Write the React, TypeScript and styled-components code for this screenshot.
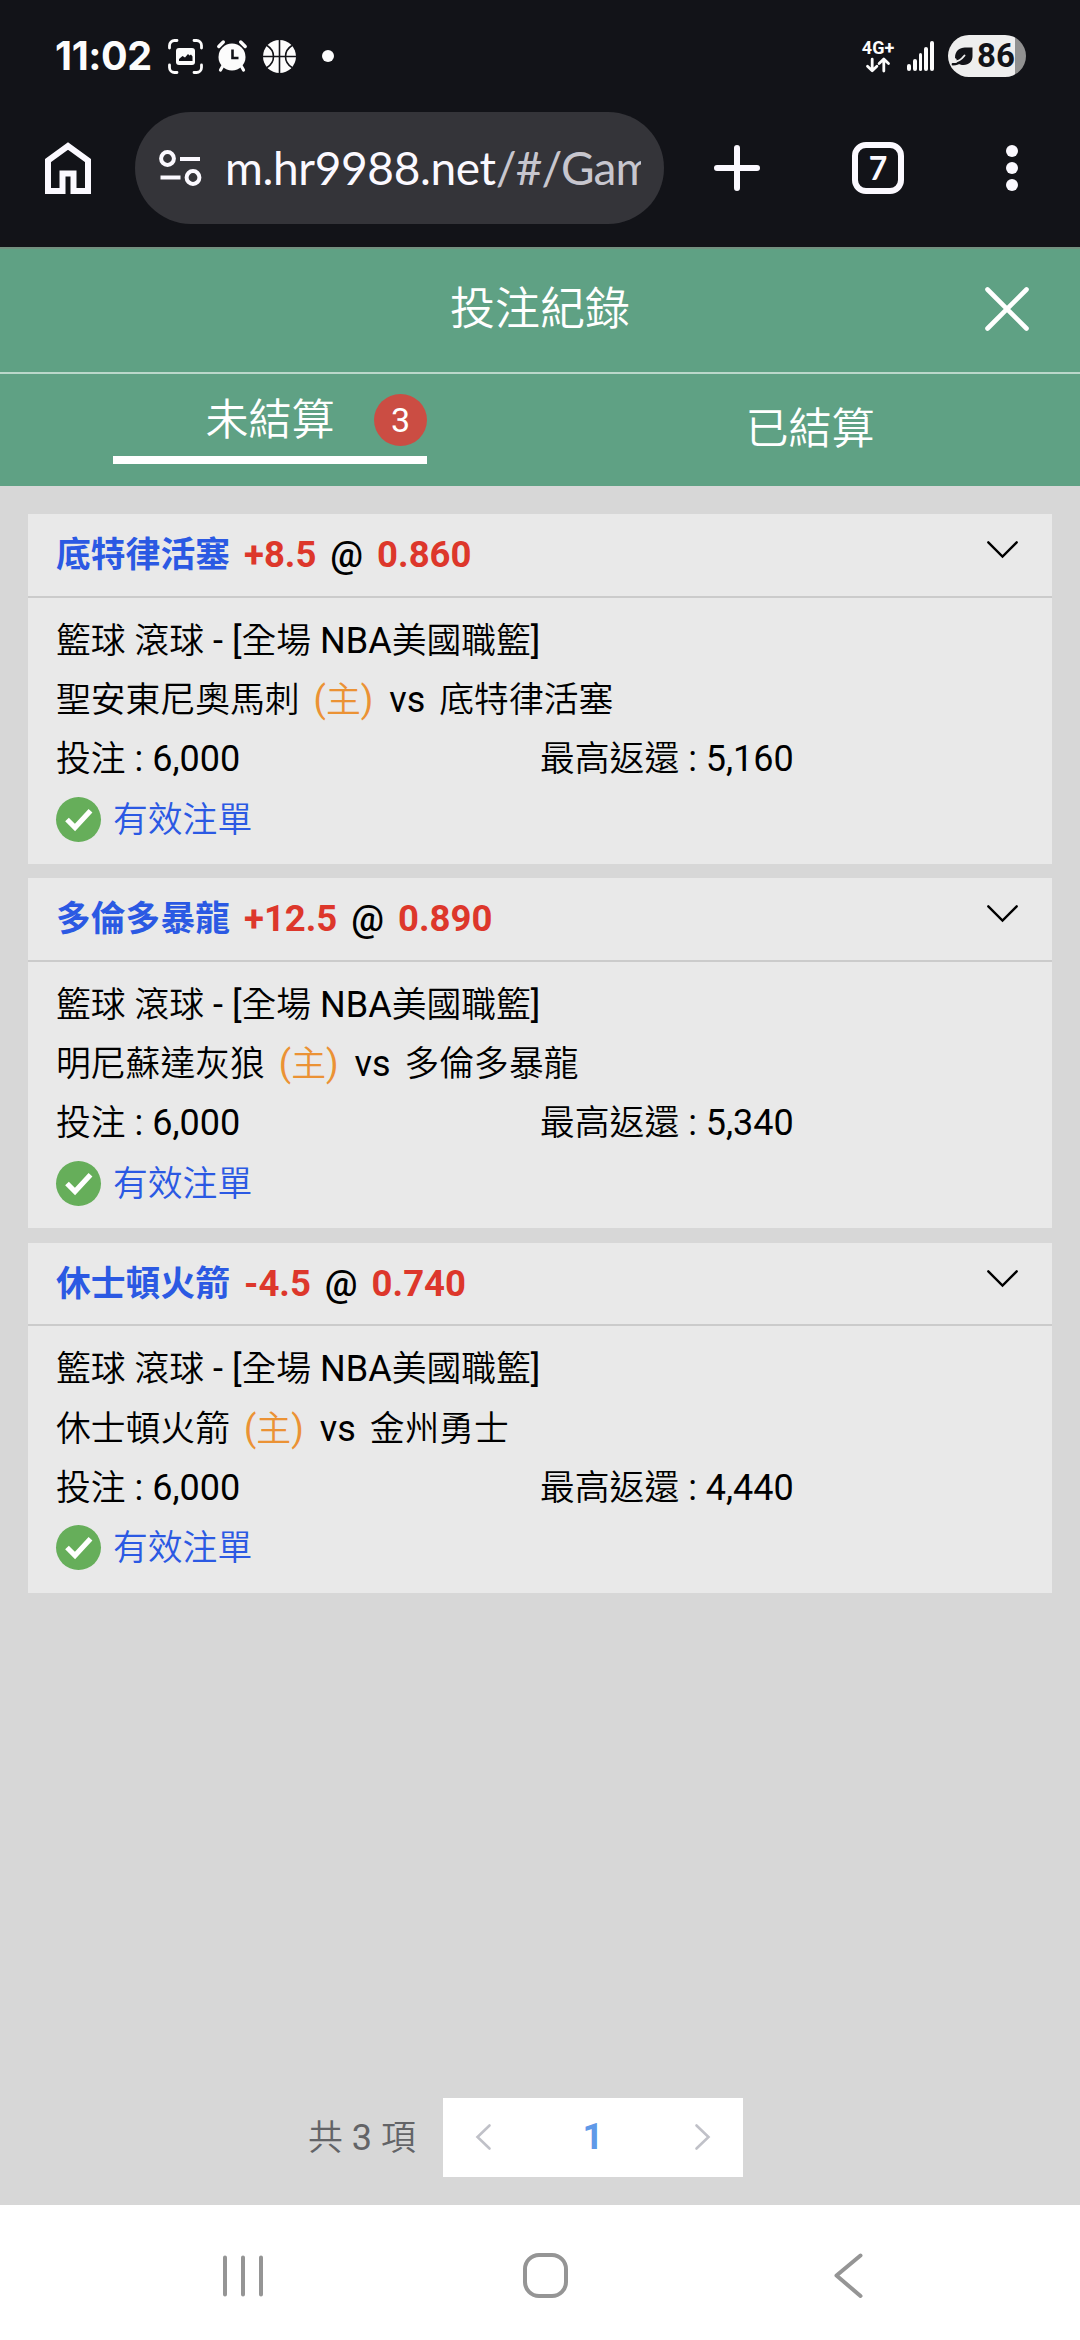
import React from "react";
import styled, { createGlobalStyle } from "styled-components";

const GlobalStyle = createGlobalStyle`
  * { box-sizing: border-box; }
  html, body { margin: 0; padding: 0; }
  body { background: #d7d7d7; }
  button { border: 0; padding: 0; background: none; color: inherit; font: inherit; }
  svg { display: block; flex: none; overflow: visible; }
`;

const Screen = styled.div`
  width: 1080px;
  height: 2340px;
  display: flex;
  flex-direction: column;
  overflow: hidden;
  background: #d7d7d7;
  color: #000;
  font-family: Roboto, "Noto Sans CJK TC", sans-serif;
`;

/* ---------- phone status bar ---------- */

const StatusBar = styled.div`
  height: 112px;
  flex: none;
  display: flex;
  align-items: center;
  justify-content: space-between;
  padding: 0 54px 0 55px;
  background: #121318;
  color: #fcfcfc;
`;

const StatusGroup = styled.div`
  display: flex;
  align-items: center;
`;

const Clock = styled.span`
  width: 113px;
  font: 700 39.500px/40px Inter, sans-serif;
  letter-spacing: -0.4px;
  white-space: nowrap;
`;

const NoticeIcons = styled.div`
  display: flex;
  align-items: center;
`;

const NoticeSlot = styled.span<{ $gap: number }>`
  display: block;
  margin-right: ${(p) => p.$gap}px;
`;

const Network = styled.div`
  width: 34px;
  display: flex;
  flex-direction: column;
  align-items: center;
  gap: 3px;
  margin-right: 12px;
`;

const NetworkName = styled.span`
  font: 700 18px/14px Roboto, sans-serif;
  white-space: nowrap;
`;

const Signal = styled.div`
  height: 29px;
  display: flex;
  align-items: flex-end;
  gap: 2px;
  margin-right: 14px;
`;

const SignalBar = styled.i<{ $h: number }>`
  width: 3.8px;
  height: ${(p) => p.$h}px;
  border-radius: 2px;
  background: #fcfcfc;
`;

const Battery = styled.div`
  width: 78px;
  height: 42px;
  border-radius: 21px;
  display: flex;
  align-items: center;
  padding-left: 4px;
  gap: 4px;
  background: linear-gradient(90deg, #eeeeee 67px, #919191 67px);
  color: #121318;
  font: 700 33px/42px Roboto, sans-serif;
`;

/* ---------- browser toolbar ---------- */

const BrowserBar = styled.div`
  height: 135px;
  flex: none;
  display: flex;
  align-items: flex-start;
  padding-left: 45px;
  background: #121318;
  color: #fbf9ff;
`;

const ToolButton = styled.button<{ $w: number; $after: number }>`
  width: ${(p) => p.$w}px;
  height: 112px;
  flex: none;
  display: flex;
  align-items: center;
  justify-content: center;
  margin-right: ${(p) => p.$after}px;
`;

const AddressPill = styled.div`
  width: 529px;
  height: 112px;
  flex: none;
  display: flex;
  align-items: center;
  padding: 0 23px 0 24px;
  gap: 23px;
  margin-right: 50px;
  border-radius: 56px;
  background: #343439;
`;

const Address = styled.div`
  flex: 1;
  min-width: 0;
  overflow: hidden;
  white-space: nowrap;
  font: 400 46px/60px Lato, sans-serif;
  letter-spacing: -0.35px;
`;

const AddressPath = styled.span`
  color: #c7c6ce;
  letter-spacing: -0.9px;
`;

const TabCount = styled.span`
  width: 52px;
  height: 52px;
  border: 6px solid #fbf9ff;
  border-radius: 14px;
  display: flex;
  align-items: center;
  justify-content: center;
  font: 700 32px/40px Lato, sans-serif;
`;

/* ---------- page header ---------- */

const PageHeader = styled.header`
  height: 127px;
  flex: none;
  display: grid;
  grid-template-columns: 100px 1fr 100px;
  align-items: center;
  justify-items: center;
  padding-bottom: 3px;
  border-top: 2px solid #73907f;
  border-bottom: 2px solid #bbd8cb;
  background: #5fa184;
  color: #fff;
`;

const PageTitle = styled.h1`
  grid-column: 2;
  margin: 0;
  padding-top: 2px;
  font-size: 45px;
  font-weight: 350;
  line-height: 60px;
`;

const CloseButton = styled.button`
  margin-right: 46px;
`;

const Tabs = styled.nav`
  height: 112px;
  flex: none;
  display: grid;
  grid-template-columns: 1fr 1fr;
  justify-items: center;
  background: #5fa184;
  color: #fff;
`;

const Tab = styled.div<{ $active?: boolean }>`
  width: 314px;
  height: ${(p) => (p.$active ? 90 : 100)}px;
  display: grid;
  grid-template-columns: 1fr auto 1fr;
  align-items: center;
  justify-items: end;
  border-bottom: ${(p) => (p.$active ? "8px solid #fff" : "0")};
`;

const TabLabel = styled.span`
  grid-column: 2;
  padding-top: 9px;
  font-size: 43px;
  font-weight: 350;
  line-height: 56px;
`;

const TabBadge = styled.span`
  width: 53px;
  height: 52px;
  margin-top: 10px;
  border-radius: 50%;
  background: #cb4d43;
  font-size: 34px;
  line-height: 53px;
  text-align: center;
`;

/* ---------- bet list ---------- */

const List = styled.main`
  flex: 1;
  display: flex;
  flex-direction: column;
  gap: 14.4px;
  padding: 28px 28px 0;
`;

const Card = styled.section`
  height: 350px;
  background: #e9e9e9;
  font-size: 34.8px;
  font-weight: 350;
`;

const Latin = styled.span`
  font-size: 36px;
  font-weight: 400;
`;

const CardHead = styled.div`
  height: 83.6px;
  display: flex;
  align-items: flex-start;
  justify-content: space-between;
  padding: 17px 34px 0 28px;
  border-bottom: 2px solid #cbcbcb;
`;

const Selection = styled.div`
  display: flex;
  gap: 14px;
  font-size: 36.500px;
  line-height: 48px;
`;

const Team = styled.span`
  color: #2b59e3;
  font-size: 34.8px;
  font-weight: 700;
`;

const Odds = styled.span`
  color: #dd372b;
  font-weight: 700;
`;

const At = styled.span`
  font-weight: 500;
`;

const ChevronSlot = styled.span`
  padding-top: 10px;
`;

const CardBody = styled.div`
  display: flex;
  flex-direction: column;
  padding: 14px 28px 0;
`;

const Line = styled.div`
  height: 59.2px;
  line-height: 59px;
  white-space: pre;
`;

const Matchup = styled(Line)`
  display: flex;
`;

const Host = styled.span`
  margin: 0 16px 0 14px;
  color: #eb9234;
`;

const Versus = styled(Latin)`
  margin-right: 14px;
`;

const Amounts = styled(Line)`
  display: grid;
  grid-template-columns: 1fr 1fr;
`;

const Status = styled(Line)`
  display: flex;
  align-items: center;
  gap: 12px;
  height: 60px;
  color: #2b59e3;
`;

const StatusText = styled.span`
  padding-top: 2px;
`;

/* ---------- pager ---------- */

const Pager = styled.footer`
  height: 107px;
  flex: none;
  display: flex;
  align-items: flex-start;
  padding-left: 308px;
  gap: 28px;
  font-size: 35px;
  color: #636467;
`;

const Total = styled.span`
  width: 107px;
  padding-top: 2px;
  font-size: 34.8px;
  font-weight: 350;
  line-height: 76px;
  white-space: nowrap;
`;

const PageBox = styled.div`
  width: 300px;
  height: 79px;
  display: flex;
  align-items: center;
  justify-content: space-between;
  padding: 0 33px 2px;
  background: #fff;
`;

const PageNumber = styled.span`
  color: #5f99e8;
  font-size: 36.500px;
  font-weight: 700;
  line-height: 76px;
`;

const SystemNav = styled.div`
  height: 135px;
  flex: none;
  display: flex;
  align-items: flex-start;
  padding: 48px 0 0 223px;
  background: #fff;
`;

const NavKey = styled.button<{ $after: number }>`
  margin-right: ${(p) => p.$after}px;
`;

/* ---------- icons ---------- */

const CaptureIcon = () => (
  <svg width="35" height="35" viewBox="0 0 35 35" fill="none">
    <path
      d="M1.5 9V6.5a5 5 0 0 1 5-5H9M26 1.5h2.500a5 5 0 0 1 5 5V9M33.500 26v2.500a5 5 0 0 1-5 5H26M9 33.500H6.500a5 5 0 0 1-5-5V26"
      stroke="#fcfcfc"
      strokeWidth="2.8"
      strokeLinecap="round"
    />
    <rect x="8" y="9" width="19" height="17" rx="3" fill="#fcfcfc" />
    <path d="M11 22v-2l3.500-3 2.500 1.500 3-3.500 1.500 1.500 1.500-1 1.500 2V22z" fill="#121318" />
  </svg>
);

const AlarmIcon = () => (
  <svg width="30" height="32" viewBox="0 0 30 32" fill="none">
    <circle cx="15" cy="17" r="13.500" fill="#fcfcfc" />
    <path d="M1.800 6.500l4.500-4.500M28.200 6.500L23.700 2" stroke="#fcfcfc" strokeWidth="3.400" strokeLinecap="round" />
    <path d="M5.500 26.500L3.500 30M24.500 26.500l2 3.500" stroke="#fcfcfc" strokeWidth="3.200" strokeLinecap="round" />
    <path d="M15.500 9.500v8.500h6" stroke="#121318" strokeWidth="2.600" />
  </svg>
);

const BallIcon = () => (
  <svg width="33" height="33" viewBox="0 0 33 33" fill="none">
    <circle cx="16.500" cy="16.500" r="16.500" fill="#fcfcfc" />
    <path
      d="M16.500 0v33M0 16.500h33M4 5.500C8 8 10.500 11.500 10.500 16.500S8 25 4 27.500M29 5.500c-4 2.500-6.500 6-6.500 11s2.500 8.500 6.500 11"
      stroke="#121318"
      strokeWidth="1.600"
    />
  </svg>
);

const DotIcon = () => (
  <svg width="12" height="12" viewBox="0 0 12 12">
    <circle cx="6" cy="6" r="6" fill="#fcfcfc" />
  </svg>
);

const ArrowsIcon = () => (
  <svg width="24" height="14" viewBox="0 0 24 14" fill="none" stroke="#fcfcfc" strokeWidth="2.800" strokeLinecap="round" strokeLinejoin="round">
    <path d="M6.200 1.200V12.500M1.500 8.300l4.700 4.500 4.700-4.500M17.800 13V1.300M13.100 5.500l4.700-4.500 4.700 4.500" />
  </svg>
);

const LeafIcon = () => (
  <svg width="21" height="19" viewBox="0 0 21 19" fill="none">
    <path d="M20.500.5v8.500c0 5.500-3.500 9-9 9C7 18 3 15.500 3 10.500 3 4 7.500.5 13 .5z" fill="#121318" />
    <path d="M0 12.500c1.500.5 3 .5 4.500-.2" stroke="#eeeeee" strokeWidth="2.500" />
    <path d="M.8 17.300c4.200 0 6.700-1.200 8.700-3.300" stroke="#121318" strokeWidth="2.400" strokeLinecap="round" />
    <path d="M1.500 15c4.500-.3 8-2.500 11-6.500" stroke="#eeeeee" strokeWidth="1.900" strokeLinecap="round" />
  </svg>
);

const HomeIcon = () => (
  <svg width="46" height="52" viewBox="0 0 46 52" fill="none" stroke="#fbf9ff" strokeWidth="6">
    <path d="M3 49V18.500L23 4l20 14.500V49H28.500V31.500h-11V49z" />
  </svg>
);

const TuneIcon = () => (
  <svg width="43" height="36" viewBox="0 0 43 36" fill="none" stroke="#fbf9ff" strokeWidth="4">
    <circle cx="8.500" cy="8.500" r="6.400" />
    <circle cx="34" cy="27.500" r="6.400" />
    <path d="M21 9h20M1.500 27.500h20" />
  </svg>
);

const PlusIcon = () => (
  <svg width="46" height="46" viewBox="0 0 46 46" fill="none" stroke="#fbf9ff" strokeWidth="6" strokeLinecap="round">
    <path d="M23 3v40M3 23h40" />
  </svg>
);

const MoreIcon = () => (
  <svg width="12" height="46" viewBox="0 0 12 46" fill="#fbf9ff">
    <circle cx="6" cy="6" r="6" />
    <circle cx="6" cy="23" r="6" />
    <circle cx="6" cy="40" r="6" />
  </svg>
);

const CloseIcon = () => (
  <svg width="44" height="44" viewBox="0 0 44 44" fill="none" stroke="#fff" strokeWidth="4.600" strokeLinecap="round">
    <path d="M2.500 2.500l39 39M41.500 2.500l-39 39" />
  </svg>
);

const ChevronDown = () => (
  <svg width="31" height="17" viewBox="0 0 31 17" fill="none" stroke="#000" strokeWidth="2.400" strokeLinecap="round">
    <path d="M1.300 1.300L15.500 15.500 29.700 1.300" />
  </svg>
);

const CheckIcon = () => (
  <svg width="45" height="45" viewBox="0 0 45 45" fill="none">
    <circle cx="22.500" cy="22.500" r="22.500" fill="#66ae5a" />
    <path d="M11 22.500l8 8L34.500 13.800" stroke="#fff" strokeWidth="5.200" />
  </svg>
);

const PageArrow = ({ d }: { d: string }) => (
  <svg width="15" height="26" viewBox="0 0 15 26" fill="none" stroke="#c0c1c8" strokeWidth="2.600" strokeLinecap="round">
    <path d={d} />
  </svg>
);

const navStroke = { fill: "none", stroke: "#959595", strokeWidth: 4, strokeLinecap: "round" as const };

const RecentsIcon = () => (
  <svg width="40" height="45" viewBox="0 0 40 45" {...navStroke}>
    <path d="M2 4.500v37M20 4.500v37M38 4.500v37" />
  </svg>
);

const HomeKeyIcon = () => (
  <svg width="45" height="45" viewBox="0 0 45 45" {...navStroke}>
    <rect x="2" y="2" width="41" height="41" rx="14" />
  </svg>
);

const BackIcon = () => (
  <svg width="29" height="45" viewBox="0 0 29 45" {...navStroke} strokeLinejoin="round">
    <path d="M26.500 2.500L2.500 22.500l24 20.500" />
  </svg>
);

/* ---------- data ---------- */

interface Bet {
  pick: string;
  line: string;
  odds: string;
  home: string;
  away: string;
  stake: string;
  payout: string;
}

const bets: Bet[] = [
  { pick: "底特律活塞", line: "+8.5", odds: "0.860", home: "聖安東尼奧馬刺", away: "底特律活塞", stake: "6,000", payout: "5,160" },
  { pick: "多倫多暴龍", line: "+12.5", odds: "0.890", home: "明尼蘇達灰狼", away: "多倫多暴龍", stake: "6,000", payout: "5,340" },
  { pick: "休士頓火箭", line: "-4.5", odds: "0.740", home: "休士頓火箭", away: "金州勇士", stake: "6,000", payout: "4,440" },
];

/* Latin letters and digits are set slightly larger than the Chinese beside them. */
const Mixed = ({ children }: { children: string }) => (
  <>
    {children
      .split(/([\x20-\x7e]+)/)
      .filter(Boolean)
      .map((run, i) => (/^[\x20-\x7e]/.test(run) ? <Latin key={i}>{run}</Latin> : run))}
  </>
);

const BetCard = ({ bet }: { bet: Bet }) => (
  <Card>
    <CardHead>
      <Selection>
        <Team>{bet.pick}</Team>
        <Odds>{bet.line}</Odds>
        <At>@</At>
        <Odds>{bet.odds}</Odds>
      </Selection>
      <ChevronSlot>
        <ChevronDown />
      </ChevronSlot>
    </CardHead>
    <CardBody>
      <Line>
        <Mixed>籃球 滾球 - [全場 NBA美國職籃]</Mixed>
      </Line>
      <Matchup>
        <span>{bet.home}</span>
        <Host>
          <Mixed>(主)</Mixed>
        </Host>
        <Versus>vs</Versus>
        <span>{bet.away}</span>
      </Matchup>
      <Amounts>
        <span>
          <Mixed>{`投注 : ${bet.stake}`}</Mixed>
        </span>
        <span>
          <Mixed>{`最高返還 : ${bet.payout}`}</Mixed>
        </span>
      </Amounts>
      <Status>
        <CheckIcon />
        <StatusText>有效注單</StatusText>
      </Status>
    </CardBody>
  </Card>
);

export default function App() {
  return (
    <>
      <GlobalStyle />
      <Screen>
        <StatusBar>
          <StatusGroup>
            <Clock>11:02</Clock>
            <NoticeIcons>
              <NoticeSlot $gap={14}><CaptureIcon /></NoticeSlot>
              <NoticeSlot $gap={16}><AlarmIcon /></NoticeSlot>
              <NoticeSlot $gap={26}><BallIcon /></NoticeSlot>
              <NoticeSlot $gap={0}><DotIcon /></NoticeSlot>
            </NoticeIcons>
          </StatusGroup>
          <StatusGroup>
            <Network>
              <NetworkName>4G+</NetworkName>
              <ArrowsIcon />
            </Network>
            <Signal>
              {[7, 12, 18, 24, 30].map((h) => (
                <SignalBar key={h} $h={h} />
              ))}
            </Signal>
            <Battery>
              <LeafIcon />
              86
            </Battery>
          </StatusGroup>
        </StatusBar>

        <BrowserBar>
          <ToolButton $w={46} $after={44}><HomeIcon /></ToolButton>
          <AddressPill>
            <TuneIcon />
            <Address>
              m.hr9988.net<AddressPath>/#/Gam</AddressPath>
            </Address>
          </AddressPill>
          <ToolButton $w={46} $after={92}><PlusIcon /></ToolButton>
          <ToolButton $w={52} $after={102}><TabCount>7</TabCount></ToolButton>
          <ToolButton $w={12} $after={0}><MoreIcon /></ToolButton>
        </BrowserBar>

        <PageHeader>
          <PageTitle>投注紀錄</PageTitle>
          <CloseButton><CloseIcon /></CloseButton>
        </PageHeader>
        <Tabs>
          <Tab $active>
            <TabLabel>未結算</TabLabel>
            <TabBadge>3</TabBadge>
          </Tab>
          <Tab>
            <TabLabel>已結算</TabLabel>
          </Tab>
        </Tabs>

        <List>
          {bets.map((bet) => (
            <BetCard key={bet.pick} bet={bet} />
          ))}
        </List>

        <Pager>
          <Total>
            <Mixed>共 3 項</Mixed>
          </Total>
          <PageBox>
            <PageArrow d="M13.500 1.500L1.500 13l12 11.500" />
            <PageNumber>1</PageNumber>
            <PageArrow d="M1.500 1.500L13.500 13l-12 11.500" />
          </PageBox>
        </Pager>

        <SystemNav>
          <NavKey $after={260}><RecentsIcon /></NavKey>
          <NavKey $after={266}><HomeKeyIcon /></NavKey>
          <NavKey $after={0}><BackIcon /></NavKey>
        </SystemNav>
      </Screen>
    </>
  );
}
